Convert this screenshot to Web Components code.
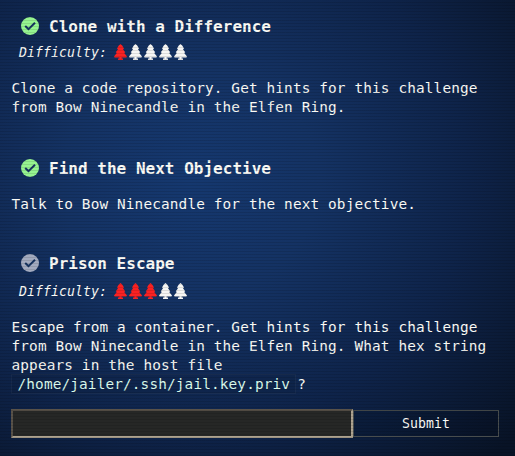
<!DOCTYPE html>
<html lang="en"><head><meta charset="utf-8"><title>Objectives</title>
<style>html,body{margin:0;width:515px;height:456px;overflow:hidden}</style></head>
<body>
<objective-panel>
<objective-item style="height:142px" name="Clone with a Difference" done level="1">Clone a code repository. Get hints for this challenge<br>from Bow Ninecandle in the Elfen Ring.</objective-item>
<objective-item style="height:95px;--body-gap:17px" name="Find the Next Objective" done>Talk to Bow Ninecandle for the next objective.</objective-item>
<objective-item style="height:156px;--rate-gap:10px" name="Prison Escape" level="3">Escape from a container. Get hints for this challenge<br>from Bow Ninecandle in the Elfen Ring. What hex string<br>appears in the host file<br><code-chip>/home/jailer/.ssh/jail.key.priv</code-chip>?</objective-item>
<answer-form></answer-form>
</objective-panel>
<script>
const define=(name,html,setup)=>customElements.define(name,class extends HTMLElement{
  connectedCallback(){
    if(this.shadowRoot)return;
    const t=document.createElement('template');t.innerHTML=html;
    this.attachShadow({mode:'open'}).append(t.content.cloneNode(true));
    if(setup)setup(this,this.shadowRoot);
  }
});
define('fir-tree',`<style>:host{display:block;width:13px;height:16px;color:#f6f6f4}:host([lit]){color:#fa2222}svg{display:block}</style>
<svg width="13" height="16" viewBox="0 0 13 16"><path fill="currentColor" d="M6.5 0 L8.2 1.6 L10 4.6 L9 5.2 L11.2 8.2 L10.2 8.9 L13 12.6 L12.4 13.4 H7.6 V14.6 H9 V16 H4 V14.6 H5.4 V13.4 H.6 L0 12.6 L2.8 8.9 L1.8 8.2 L4 5.2 L3 4.6 L4.8 1.6Z"/></svg>`);
define('status-check',`<style>:host{display:block;width:18px;height:18px;color:#a3abbf}:host([done]){color:#96f490}svg{display:block}</style>
<svg width="18" height="18" viewBox="0 0 18 18"><circle cx="9" cy="9" r="9" fill="currentColor"/><path d="M4.2 9 7.5 12.1 14 5.8" fill="none" stroke="#16335f" stroke-width="2"/></svg>`);
define('code-chip',`<style>:host{display:inline-block;box-sizing:border-box;height:20px;line-height:18px;margin:-1px 1px 0 -1px;padding:0 5px 0 6px;border:1px solid #ffffff0b;background:#0000000d;color:#daf9ea}</style><slot></slot>`);
define('objective-item',`<style>
:host{display:block;box-sizing:border-box;font:14.4px/19px "DejaVu Sans Mono",monospace;letter-spacing:.13px;color:#fbfbf6;white-space:nowrap}
header{display:flex;align-items:center;gap:10px;height:20px;padding-left:10px}
h2{margin:0;font-size:16px;line-height:20px;letter-spacing:.02px;padding-top:1px}
.rate{display:flex;height:16px;margin:var(--rate-gap,8px) 0 0 8px;align-items:flex-start}
em{font-size:13.2px;letter-spacing:.05px;line-height:16px;width:95px;padding-top:1px}
.trees{display:flex;gap:2px}
.body{margin-top:var(--body-gap,19px);padding-left:.5px}
</style><header><status-check></status-check><h2></h2></header><div class="rate"><em>Difficulty:</em><div class="trees"></div></div><div class="body"><slot></slot></div>`,(el,r)=>{
  r.querySelector('h2').textContent=el.getAttribute('name');
  if(el.hasAttribute('done'))r.querySelector('status-check').setAttribute('done','');
  if(!el.hasAttribute('level')){r.querySelector('.rate').remove();return}
  for(let i=0;i<5;i++){const t=document.createElement('fir-tree');if(i<+el.getAttribute('level'))t.setAttribute('lit','');r.querySelector('.trees').append(t)}
});
define('answer-form',`<style>
:host{display:flex;align-items:center}
input{box-sizing:border-box;width:342px;height:29px;margin:0;border:2px solid;border-color:#595249 #aea390 #aea390 #595249;background:#262726;outline:0;padding:0 6px;color:#eee}
button{box-sizing:border-box;width:146px;height:27px;margin:0;padding:0;border:1px solid #484d4e;background:#00000018;color:#fbfbf6;font:13.2px "DejaVu Sans Mono",monospace;letter-spacing:.05px;line-height:24px}
</style><input aria-label="Answer"><button>Submit</button>`);
define('objective-panel',`<style>
:host{display:block;position:relative;box-sizing:border-box;width:515px;height:456px;padding:16px 11px 0;overflow:hidden;background:radial-gradient(ellipse 430px 390px at 190px 180px,#15386f 0%,#143263 30%,#0e2349 65%,#081326 100%)}
:host::after{content:"";position:absolute;inset:0;pointer-events:none;background:repeating-linear-gradient(#0000 0 2px,#0000001c 2px 3px)}
</style><slot></slot>`);
</script>
</body></html>
